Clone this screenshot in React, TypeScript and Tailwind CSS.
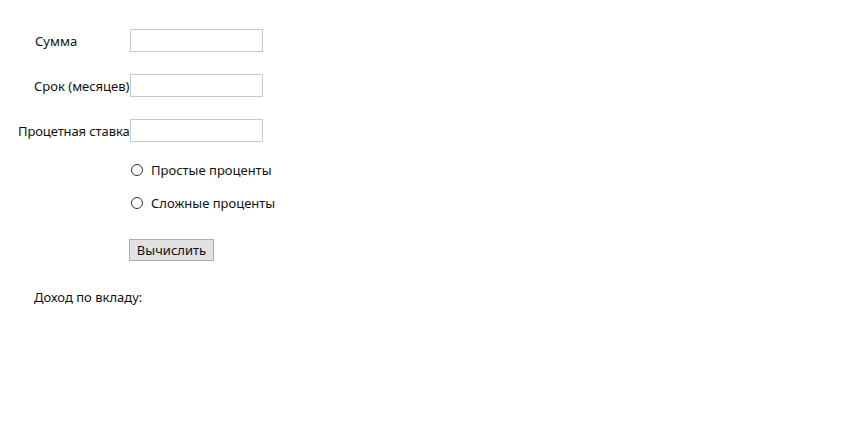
export default function App() {
  const field = "h-[23px] w-[133px] border border-[#c8c8c8] bg-white";
  return (
    <div
      className="h-[445px] w-[864px] bg-white text-[13px] text-[#111]"
      style={{ fontFamily: '"Noto Sans", "Open Sans", sans-serif' }}
    >
      <div className="flex flex-col pt-[29px]">
        <div className="flex h-[23px] items-center">
          <span className="w-[130px] pl-[35px] pt-[3px]">Сумма</span>
          <div className={field} />
        </div>
        <div className="mt-[22px] flex h-[23px] items-center">
          <span className="w-[130px] pl-[34px] pt-[3px]">Срок (месяцев)</span>
          <div className={field} />
        </div>
        <div className="mt-[22px] flex h-[23px] items-center">
          <span className="w-[130px] pl-[18px] pt-[3px] tracking-[-0.1px]">Процетная ставка</span>
          <div className={field} />
        </div>
        <div className="mt-[21px] flex h-[14px] items-center pl-[131px]">
          <span className="h-[12px] w-[12px] rounded-full border border-[#333] bg-white" />
          <span className="ml-[8px] pt-[1px]">Простые проценты</span>
        </div>
        <div className="mt-[19px] flex h-[14px] items-center pl-[131px]">
          <span className="h-[12px] w-[12px] rounded-full border border-[#333] bg-white" />
          <span className="ml-[8px] pt-[1px]">Сложные проценты</span>
        </div>
        <div className="mt-[29px] pl-[129px]">
          <button
            type="button"
            className="flex h-[22px] w-[85px] items-center justify-center border border-[#adadad] bg-[#e1e1e1] pt-[1px]"
          >
            Вычислить
          </button>
        </div>
        <div className="mt-[28px] flex h-[16px] items-center pl-[34px] pt-[2px]">Доход по вкладу:</div>
      </div>
    </div>
  );
}
